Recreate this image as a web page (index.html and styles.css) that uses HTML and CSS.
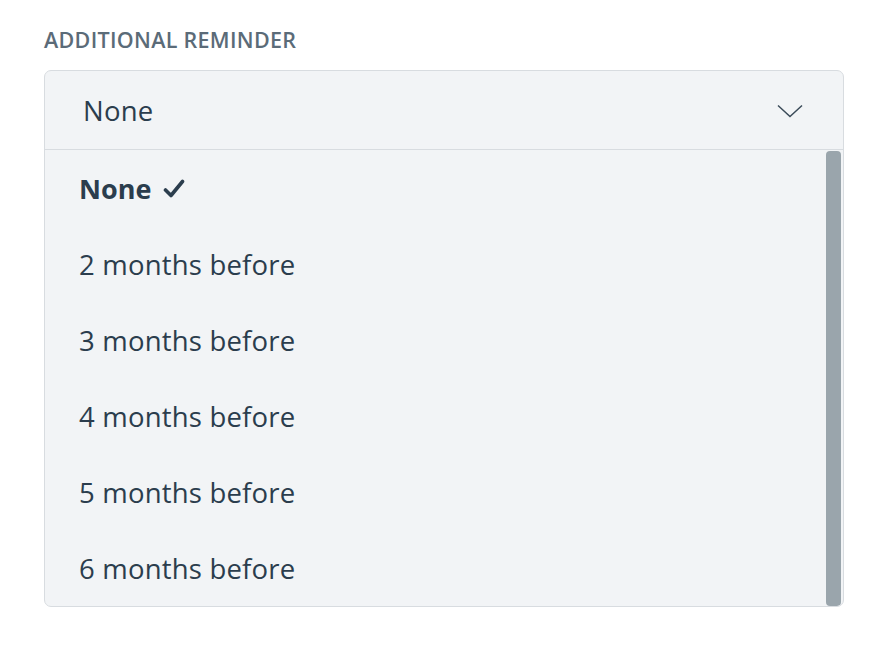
FILE: index.html
```html
<!DOCTYPE html>
<html>
<head>
<meta charset="utf-8">
<link rel="stylesheet" href="styles.css">
</head>
<body>
<div class="field">
  <div class="label">ADDITIONAL REMINDER</div>
  <div class="select">
    <div class="select-head">
      <span class="value">None</span>
      <svg class="chevron" width="26" height="14" viewBox="0 0 26 14"><path d="M1 1.5 L13 12.5 L25 1.5" fill="none" stroke="#3b4b59" stroke-width="1.5"/></svg>
    </div>
    <div class="list-wrap">
      <ul class="options">
        <li class="option selected">None <svg class="check" width="22" height="20" viewBox="0 0 22 20"><path d="M2.5 11 L8 16.5 L19.5 2.5" fill="none" stroke="#2c3e4e" stroke-width="3.6" stroke-linecap="round" stroke-linejoin="round"/></svg></li>
        <li class="option">2 months before</li>
        <li class="option">3 months before</li>
        <li class="option">4 months before</li>
        <li class="option">5 months before</li>
        <li class="option">6 months before</li>
      </ul>
      <div class="scrollbar"></div>
    </div>
  </div>
</div>
</body>
</html>
```
FILE: styles.css
```css
html, body {
  margin: 0;
  padding: 0;
  background: #ffffff;
  font-family: "Open Sans", "Noto Sans", sans-serif;
}
.field {
  padding: 25px 50px 0 44px;
}
.label {
  font-size: 21.5px;
  font-weight: 600;
  color: #5b6b78;
  line-height: 30px;
  letter-spacing: 0.3px;
  margin-bottom: 15px;
}
.select {
  width: 798px;
  border: 1px solid #d8dce0;
  border-radius: 7px;
  background: #f2f4f6;
  overflow: hidden;
}
.select-head {
  height: 78px;
  border-bottom: 1px solid #d8dce0;
  display: flex;
  align-items: center;
  justify-content: space-between;
  padding: 0 40px 0 38px;
}
.value {
  font-size: 27.5px;
  color: #2b3d4d;
  letter-spacing: 0.2px;
}
.chevron {
  display: block;
  margin-top: 2px;
}
.list-wrap {
  display: flex;
  justify-content: space-between;
}
.options {
  list-style: none;
  margin: 0;
  padding: 0 0 0 34px;
}
.option {
  height: 76px;
  display: flex;
  align-items: center;
  font-size: 27.5px;
  color: #2b3d4d;
  letter-spacing: 0.2px;
}
.option.selected {
  font-weight: 700;
  font-size: 27px;
  letter-spacing: 0;
}
.check {
  margin-left: 12px;
  margin-top: 2px;
}
.scrollbar {
  width: 15px;
  height: 455px;
  margin: 1px 2px 0 0;
  background: #9aa5ac;
  border-radius: 4px;
}
```
